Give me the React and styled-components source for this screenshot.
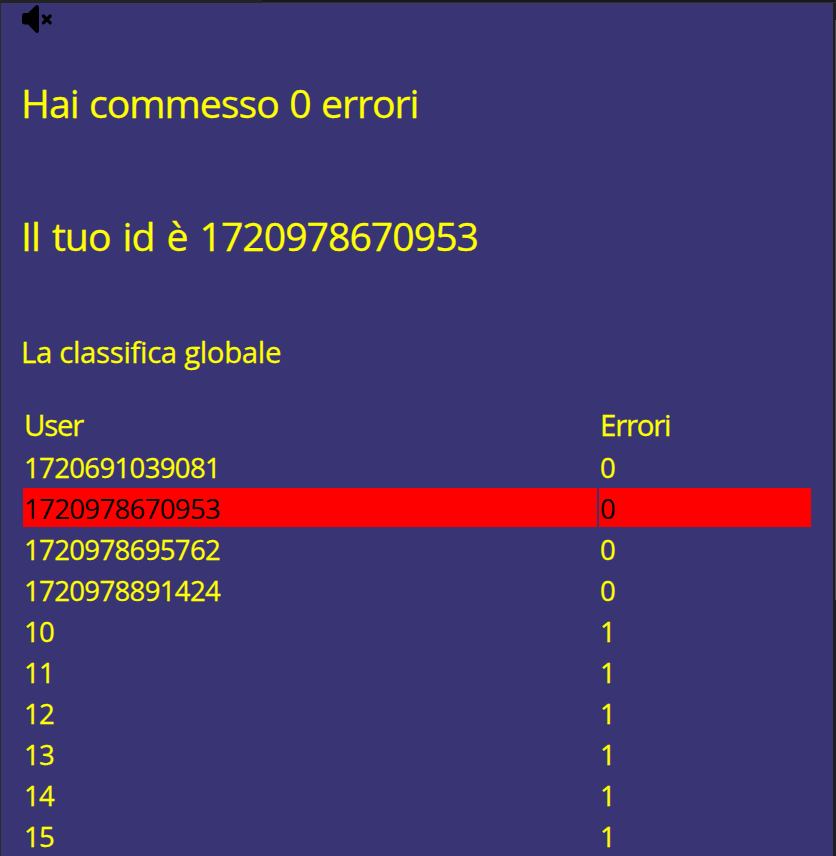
import React from "react";
import styled, { createGlobalStyle } from "styled-components";

const GlobalStyle = createGlobalStyle`
  * { box-sizing: border-box; }
  html, body { margin: 0; background: #1f1f1f; overflow: hidden; }
`;

const Frame = styled.div`
  display: grid;
  grid-template-rows: 3px 1fr;
  height: 856px;
  width: 836px;
  background: #1f1f1f;
  color: #ffff00;
  font-family: "Open Sans", "Noto Sans", sans-serif;
  -webkit-text-stroke: 0.3px #ffff00;
  overflow: hidden;
`;

const TopEdge = styled.div`
  display: grid;
  grid-template-columns: 262px 1fr;
`;

const EdgePart = styled.div`
  background: ${(p) => (p.$active ? "#232323" : "#181818")};
  border-bottom: 1px solid ${(p) => (p.$active ? "#232323" : "#2f2f2f")};
`;

const Body = styled.div`
  display: grid;
  grid-template-columns: 1fr 3px;
  min-height: 0;
`;

const Page = styled.main`
  border-left: 1px solid #2b2b2b;
  background: #393474;
  padding: 0 21px 0 20px;
  overflow: hidden;
`;

const ScrollTrack = styled.div`
  background: #1f1f1f;
  padding: 17px 0 0 2px;
`;

const ScrollThumb = styled.div`
  height: 580px;
  background: #4b4b4b;
`;

const MuteIcon = styled.svg`
  display: block;
  width: 34px;
  height: 32px;
`;

const Title = styled.h1`
  margin: 0 0 73px;
  font-size: 39.2px;
  line-height: 60px;
  font-weight: 400;
  white-space: nowrap;
  letter-spacing: ${(p) => p.$tracking};
  word-spacing: ${(p) => p.$wordGap};
  &:first-of-type { margin-top: 38px; }
`;

const Subtitle = styled.h2`
  margin: -7px 0 32px;
  font-size: 29.4px;
  line-height: 40px;
  font-weight: 400;
  letter-spacing: -0.34px;
`;

const Board = styled.div`
  display: grid;
  gap: 2px;
  padding: 0 2px;
`;

const Row = styled.div`
  display: grid;
  grid-template-columns: 574px 212px;
  gap: 2px;
`;

const HeadCell = styled.div`
  height: 41px;
  padding-left: 1px;
  font-size: 29.4px;
  line-height: 43px;
  letter-spacing: ${(p) => p.$tracking};
`;

const Cell = styled.div`
  height: 39px;
  padding: 1px 0 0 1px;
  font-size: 27.5px;
  line-height: 39px;
  letter-spacing: -0.64px;
  background: ${(p) => (p.$current ? "#ff0000" : "transparent")};
  color: ${(p) => (p.$current ? "#000000" : "inherit")};
  -webkit-text-stroke-width: ${(p) => (p.$current ? "0" : "0.3px")};
`;

const scores = [
  ["1720691039081", 0],
  ["1720978670953", 0],
  ["1720978695762", 0],
  ["1720978891424", 0],
  ["10", 1],
  ["11", 1],
  ["12", 1],
  ["13", 1],
  ["14", 1],
  ["15", 1],
];
const currentId = "1720978670953";

export default function App() {
  return (
    <>
      <GlobalStyle />
      <Frame>
        <TopEdge>
          <EdgePart $active />
          <EdgePart />
        </TopEdge>
        <Body>
          <Page>
            <MuteIcon viewBox="21 3 34 32" aria-label="Audio disattivato">
              <path d="M24.5 13H28L35.5 5.8C37.2 4.3 39 5 39 8V30C39 33 37.2 33.8 35.5 32.3L28 24.5H24.5Q22 24.5 22 21.5V16Q22 13 24.5 13Z" />
              <path
                d="M43.4 16L50.2 22.8M50.2 16L43.4 22.8"
                stroke="#000"
                strokeWidth="3.3"
                strokeLinecap="round"
              />
            </MuteIcon>
            <Title $tracking="-1px" $wordGap="1.2px">Hai commesso 0 errori</Title>
            <Title $tracking="-0.98px" $wordGap="2.8px">Il tuo id è {currentId}</Title>
            <Subtitle>La classifica globale</Subtitle>
            <Board>
              <Row>
                <HeadCell $tracking="-1.2px">User</HeadCell>
                <HeadCell $tracking="-1.2px">Errori</HeadCell>
              </Row>
              {scores.map(([id, errors]) => (
                <Row key={id}>
                  <Cell $current={id === currentId}>{id}</Cell>
                  <Cell $current={id === currentId}>{errors}</Cell>
                </Row>
              ))}
            </Board>
          </Page>
          <ScrollTrack>
            <ScrollThumb />
          </ScrollTrack>
        </Body>
      </Frame>
    </>
  );
}
